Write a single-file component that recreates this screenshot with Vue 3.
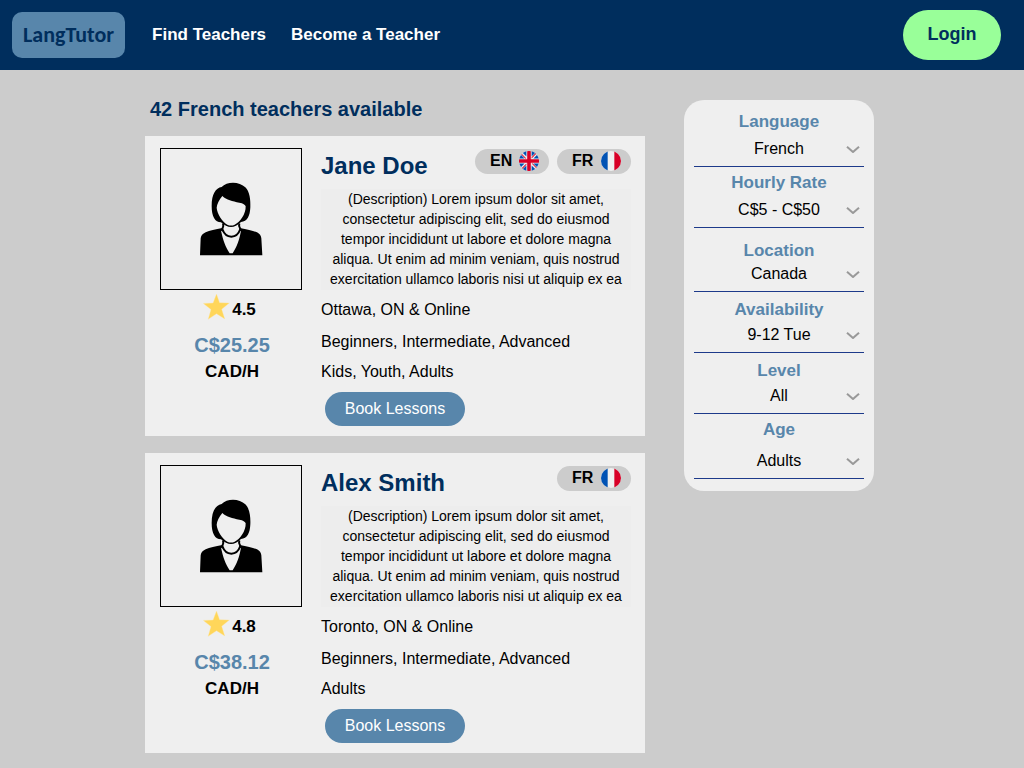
<script setup>
import { ref } from 'vue'

const description =
  '(Description) Lorem ipsum dolor sit amet, consectetur adipiscing elit, sed do eiusmod tempor incididunt ut labore et dolore magna aliqua. Ut enim ad minim veniam, quis nostrud exercitation ullamco laboris nisi ut aliquip ex ea'

const teachers = [
  {
    id: 1,
    name: 'Jane Doe',
    languages: ['EN', 'FR'],
    rating: '4.5',
    price: 'C$25.25',
    location: 'Ottawa, ON & Online',
    levels: 'Beginners, Intermediate, Advanced',
    ages: 'Kids, Youth, Adults'
  },
  {
    id: 2,
    name: 'Alex Smith',
    languages: ['FR'],
    rating: '4.8',
    price: 'C$38.12',
    location: 'Toronto, ON & Online',
    levels: 'Beginners, Intermediate, Advanced',
    ages: 'Adults'
  }
]

const filters = ref([
  { id: 'language', label: 'Language', value: 'French', options: ['French', 'English'] },
  { id: 'rate', label: 'Hourly Rate', value: 'C$5 - C$50', options: ['C$5 - C$50'] },
  { id: 'location', label: 'Location', value: 'Canada', options: ['Canada'] },
  { id: 'availability', label: 'Availability', value: '9-12 Tue', options: ['9-12 Tue'] },
  { id: 'level', label: 'Level', value: 'All', options: ['All', 'Beginners', 'Intermediate', 'Advanced'] },
  { id: 'age', label: 'Age', value: 'Adults', options: ['Adults', 'Youth', 'Kids'] }
])
</script>

<template>
  <div class="page">
    <header class="topbar">
      <a class="logo" href="#">LangTutor</a>
      <nav class="nav">
        <a href="#">Find Teachers</a>
        <a href="#">Become a Teacher</a>
      </nav>
      <button class="login" type="button">Login</button>
    </header>

    <main class="content">
      <section class="results">
        <h1 class="results-title">42 French teachers available</h1>
        <div class="cards">
          <article v-for="t in teachers" :key="t.id" class="card">
            <div class="profile">
              <div class="photo">
                <svg viewBox="-72 -63 420 420" aria-hidden="true">
                  <path d="M45 256 L47 205 Q48 193 62 187 Q80 179 112 174 L164 174 Q200 180 216 187 Q228 193 229 205 L232 256 Z" />
                  <path d="M108 182 C114 210 121 229 134 250 H143 C156 229 163 210 168 182 Q139 202 108 182 Z" fill="#efefef" />
                  <path d="M113 158 V174 Q113 198 138 198 Q164 198 164 174 V158 Z" fill="#efefef" />
                  <path d="M114 160 Q117 168 112 177 Q120 200 139 200 Q158 200 166 177 Q160 168 163 160" fill="none" stroke="#000" stroke-width="6" />
                  <path d="M108 157 C90 157 80 139 80 108 C80 72 92 54 110 51 C126 33 164 34 181 52 C194 65 197 89 196 112 C195 138 187 155 168 156 Q153 171 138 171 Q123 171 108 157 Z" />
                  <path d="M112 78 C125 90 142 94 163 98 Q180 101 182 109 C183 132 164 158 149 164 Q138 169 127 164 C112 156 96 131 95 113 Q97 96 112 78 Z" fill="#efefef" />
                </svg>
              </div>
              <div class="rating">
                <svg class="star" viewBox="0 0 78 78" aria-hidden="true">
                  <path d="M39 3 L48 28 L76 29 L54 47 L63 75 L39 60 L15 76 L23 48 L1 30 L29 29 Z" fill="#ffd65a" stroke="#ffe9a8" stroke-width="1" />
                </svg>
                <span>{{ t.rating }}</span>
              </div>
              <div class="price">{{ t.price }}</div>
              <div class="unit">CAD/H</div>
            </div>

            <div class="info">
              <div class="info-head">
                <h2 class="name">{{ t.name }}</h2>
                <ul class="badges">
                  <li v-for="lang in t.languages" :key="lang" class="badge">
                    <span>{{ lang }}</span>
                    <svg v-if="lang === 'EN'" class="flag" viewBox="0 0 512 512" aria-hidden="true">
                      <circle cx="256" cy="256" r="256" fill="#f0f0f0" />
                      <path d="M53 100C33 126 18 156 9 189h133zM503 189c-9-33-24-63-44-89l-89 89zM9 323c9 33 24 63 44 89l89-89zM412 53c-26-20-56-35-89-44v133zM100 459c26 20 56 35 89 44V370zM189 9c-33 9-63 24-89 44l89 89zM323 503c33-9 63-24 89-44l-89-89zM370 323l89 89c20-26 35-56 44-89z" fill="#0052b4" />
                      <path d="M508 210H302V4a256 256 0 0 0-92 0v206H4a256 256 0 0 0 0 92h206v206a256 256 0 0 0 92 0V302h206a256 256 0 0 0 0-92z" fill="#d80027" />
                      <path d="M323 323l114 114q8-8 15-16l-98-98zM189 323L75 437q8 8 16 15l98-98zM189 189L75 75q-8 8-15 16l98 98zM323 189L437 75q-8-8-16-15l-98 98z" fill="#d80027" />
                    </svg>
                    <svg v-else class="flag" viewBox="0 0 60 60" aria-hidden="true">
                      <clipPath :id="'round-fr-' + t.id"><circle cx="30" cy="30" r="30" /></clipPath>
                      <g :clip-path="'url(#round-fr-' + t.id + ')'">
                        <rect width="60" height="60" fill="#f0f0f0" />
                        <rect width="20" height="60" fill="#0052b4" />
                        <rect x="40" width="20" height="60" fill="#d80027" />
                      </g>
                    </svg>
                  </li>
                </ul>
              </div>
              <p class="description">{{ description }}</p>
              <p class="meta meta-location">{{ t.location }}</p>
              <p class="meta">{{ t.levels }}</p>
              <p class="meta">{{ t.ages }}</p>
              <button class="book" type="button">Book Lessons</button>
            </div>
          </article>
        </div>
      </section>

      <aside class="filters">
        <div v-for="f in filters" :key="f.id" class="filter" :class="f.id">
          <label :for="'filter-' + f.id">{{ f.label }}</label>
          <div class="picker">
            <select :id="'filter-' + f.id" v-model="f.value">
              <option v-for="o in f.options" :key="o">{{ o }}</option>
            </select>
            <svg class="chevron" viewBox="0 0 42 27" aria-hidden="true">
              <path d="M3 5 L21 21 L39 5" fill="none" stroke="#999" stroke-width="6" stroke-linejoin="round" />
            </svg>
          </div>
        </div>
      </aside>
    </main>
  </div>
</template>

<style>
body {
  margin: 0;
  background: #ccc;
}
</style>

<style scoped>
.page {
  font-family: "Liberation Sans", Arial, sans-serif;
  font-size: 16px;
  line-height: 20px;
  color: #000;
}

.page * {
  box-sizing: border-box;
}

button,
select {
  font: inherit;
  border: 0;
  cursor: pointer;
}

.topbar {
  display: flex;
  align-items: center;
  height: 70px;
  padding: 0 23px 0 12px;
  background: #002e5d;
}

.logo {
  padding: 11px;
  border-radius: 10px;
  background: #5886ab;
  color: #002e5d;
  font-family: Carlito, Calibri, Lato, sans-serif;
  font-size: 22px;
  font-weight: 700;
  line-height: 24px;
  text-decoration: none;
}

.nav {
  display: flex;
  gap: 25px;
  margin-left: 27px;
  font-size: 17px;
  font-weight: 700;
}

.nav a {
  color: #fff;
  text-decoration: none;
}

.login {
  width: 98px;
  height: 50px;
  margin-left: auto;
  padding: 0 0 2px;
  border-radius: 25px;
  background: #9f9;
  color: #002e5d;
  font-size: 18px;
  font-weight: 700;
}

.content {
  display: grid;
  grid-template-columns: minmax(0, 500px) 190px;
  justify-content: center;
  align-items: start;
  gap: 39px;
  padding: 27px 20px 15px 15px;
}

.results-title {
  margin: 0 0 15px 5px;
  color: #002e5d;
  font-size: 20px;
  line-height: 24px;
}

.cards {
  display: flex;
  flex-direction: column;
  gap: 17px;
}

.card {
  display: flex;
  gap: 19px;
  padding: 12px 14px 10px 15px;
  background: #efefef;
}

.profile {
  width: 142px;
  flex: none;
  text-align: center;
  font-size: 17px;
  font-weight: 700;
}

.photo {
  border: 1px solid #000;
}

.photo svg {
  display: block;
  width: 100%;
}

.rating {
  display: flex;
  justify-content: center;
  gap: 2px;
  margin-top: 3px;
  padding-right: 3px;
  line-height: 34px;
}

.star {
  width: 27px;
  height: 27px;
}

.price,
.unit {
  padding-left: 2px;
}

.price {
  margin-top: 6px;
  color: #5886ab;
  font-size: 20px;
  line-height: 24px;
}

.unit {
  margin-top: 5px;
}

.info {
  flex: 1;
  min-width: 0;
}

.info-head {
  display: flex;
  justify-content: space-between;
  align-items: flex-start;
}

.name {
  margin: 0;
  color: #002e5d;
  font-size: 24px;
  line-height: 36px;
}

.badges {
  display: flex;
  gap: 8px;
  margin: 1px 0 0;
  padding: 0;
  list-style: none;
}

.badge {
  display: flex;
  justify-content: space-between;
  width: 74px;
  height: 25px;
  padding: 2px 10px 0 15px;
  border-radius: 13px;
  background: #ccc;
  font-weight: 700;
}

.flag {
  width: 20px;
  height: 20px;
}

.description {
  margin: 5px 0 0;
  padding-bottom: 1px;
  background: #ededed;
  font-size: 14px;
  text-align: center;
}

.meta {
  margin: 10px 0 0;
}

.meta-location {
  margin-bottom: 12px;
}

.book {
  display: block;
  width: 140px;
  height: 34px;
  margin: 10px 0 0 4px;
  padding: 0;
  border-radius: 17px;
  background: #5886ab;
  color: #fff;
}

.filters {
  margin-top: 3px;
  padding: 0 10px 12px;
  border-radius: 20px;
  background: #efefef;
}

.filter {
  display: flex;
  flex-direction: column;
  gap: 3px;
  padding: 8px 0 5px;
  border-bottom: 1px solid #1d3a8a;
}

.filter.language {
  gap: 5px;
  padding-top: 12px;
}

.filter.rate {
  gap: 5px;
  padding-top: 6px;
}

.filter.location {
  gap: 1px;
  padding-top: 13px;
}

.filter.age {
  gap: 9px;
  padding-top: 6px;
}

.filter label {
  color: #5886ab;
  font-size: 17px;
  font-weight: 700;
  text-align: center;
}

.picker {
  display: grid;
  align-items: center;
}

.picker > * {
  grid-area: 1 / 1;
}

.picker select {
  width: 100%;
  height: 24px;
  padding: 0;
  appearance: none;
  background: transparent;
  color: #000;
  text-align: center;
  text-align-last: center;
}

.chevron {
  width: 14px;
  height: 9px;
  margin-right: 4px;
  justify-self: end;
  pointer-events: none;
}
</style>
